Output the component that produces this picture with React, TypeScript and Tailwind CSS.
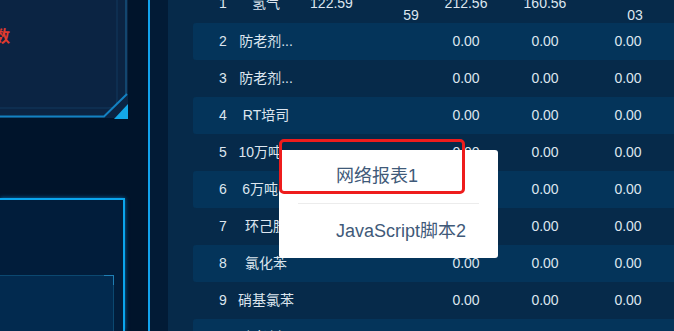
import React from 'react';

const font = { fontFamily: '"Liberation Sans", "Noto Sans CJK SC", sans-serif' };

type Row = { idx: string; name: string; vals: string[] };

const rows: Row[] = [
  { idx: '2', name: '防老剂...', vals: ['', '', '0.00', '0.00', '0.00'] },
  { idx: '3', name: '防老剂...', vals: ['', '', '0.00', '0.00', '0.00'] },
  { idx: '4', name: 'RT培司', vals: ['', '', '0.00', '0.00', '0.00'] },
  { idx: '5', name: '10万吨...', vals: ['', '', '0.00', '0.00', '0.00'] },
  { idx: '6', name: '6万吨...', vals: ['', '', '0.00', '0.00', '0.00'] },
  { idx: '7', name: '环己胺', vals: ['', '', '0.00', '0.00', '0.00'] },
  { idx: '8', name: '氯化苯', vals: ['', '', '0.00', '0.00', '0.00'] },
  { idx: '9', name: '硝基氯苯', vals: ['', '', '0.00', '0.00', '0.00'] },
  { idx: '10', name: '防老剂...', vals: ['', '', '0.00', '0.00', '0.00'] },
];

// column widths (px) so that text centres line up with the grid
const cell = 'flex shrink-0 justify-center whitespace-nowrap';

function Cells({ idx, name, vals }: Row) {
  return (
    <>
      <div className={`${cell} w-[42px]`}>{idx}</div>
      <div className={`${cell} w-[44px]`}>{name}</div>
      <div className={`${cell} w-[87px]`}>{vals[0]}</div>
      <div className={`${cell} w-[72px]`}>{vals[1]}</div>
      <div className={`${cell} w-[38px]`}>{vals[2]}</div>
      <div className={`${cell} w-[120px]`}>{vals[3]}</div>
      <div className={`${cell} w-[46px]`}>{vals[4]}</div>
    </>
  );
}

function TopCard() {
  return (
    <div className="relative h-[120px] w-[128px] bg-[#0b2443] overflow-hidden">
      <div className="mt-[27px] -ml-[54px] text-[16px] font-bold leading-[20px] text-[#e23b2e] whitespace-nowrap">
        设备参数
      </div>
      <svg className="absolute inset-0" width="128" height="120" viewBox="0 0 128 120">
        <path d="M0 108 H109 Q117 108 117 100 V0" fill="none" stroke="#12395e" strokeWidth="1" />
        <path d="M126 0 V94" stroke="#12466f" strokeWidth="2" />
        <rect x="0" y="118" width="128" height="2" fill="#00142b" />
        <polyline points="0,116.5 104,116.5 127,94" fill="none" stroke="#1381c2" strokeWidth="2" />
        <polygon points="114,119 128,119 128,104" fill="#13a8e8" />
      </svg>
    </div>
  );
}

export default function App() {
  return (
    <div className="relative flex h-[331px] w-[674px] overflow-hidden bg-[#00142b] text-[14px]" style={font}>
      {/* left column */}
      <div className="flex w-[148px] shrink-0 flex-col">
        <TopCard />
        <div className="mt-[78px] flex w-[125px] flex-1 flex-col border-t-2 border-r-2 border-[#0ba5ec] bg-[#011d3b] shadow-[0_0_4px_#0b6fb0]">
          <div className="relative mt-[75px] w-[114px] flex-1 border-t border-r border-[#0b4870] bg-[#022a4f]">
            <div className="absolute -top-px -right-px h-[10px] w-[10px] border-t border-r border-[#1f7fb4]" />
          </div>
        </div>
      </div>

      {/* divider */}
      <div className="w-[2px] shrink-0 bg-[#12a3ec]" />
      <div className="w-[18px] shrink-0 bg-[#021b36]" />

      {/* table */}
      <div className="min-w-0 flex-1 bg-[#062a4a] pl-[25px] text-[#dde6ef]">
        <div className="-mt-[17px] w-[520px]">
          <div className="flex h-[40px] items-center rounded-[3px] pl-[9px] leading-[24px]">
            <div className={`${cell} w-[42px]`}>1</div>
            <div className={`${cell} w-[44px]`}>氢气</div>
            <div className={`${cell} w-[87px]`}>122.59</div>
            <div className="flex w-[72px] shrink-0 flex-col items-center">
              <span>1234.</span>
              <span>59</span>
            </div>
            <div className={`${cell} w-[38px]`}>212.56</div>
            <div className={`${cell} w-[120px]`}>160.56</div>
            <div className="flex w-[46px] shrink-0 flex-col items-center">
              <span>1500.</span>
              <span className="pl-[14px]">03</span>
            </div>
          </div>
          {rows.map((r, i) => (
            <div
              key={r.idx}
              className={`flex h-[37px] items-center rounded-[3px] pl-[9px] ${i % 2 === 0 ? 'bg-[#04345a]' : ''}`}
            >
              <Cells {...r} />
            </div>
          ))}
        </div>
      </div>

      {/* context menu */}
      <div className="absolute left-[279px] top-[150px] z-10 w-[219px] rounded-[3px] bg-white text-[18px] text-[#3f5a79]">
        <div className="flex h-[53px] items-center pl-[57px]">网络报表1</div>
        <div className="mx-[19px] h-px bg-[#ececec]" />
        <div className="flex h-[54px] items-center pl-[57px]">JavaScript脚本2</div>
      </div>
      <div className="absolute left-[279px] top-[139px] z-20 h-[55px] w-[186px] rounded-[5px] border-[3px] border-[#ee1c1c]" />
    </div>
  );
}
